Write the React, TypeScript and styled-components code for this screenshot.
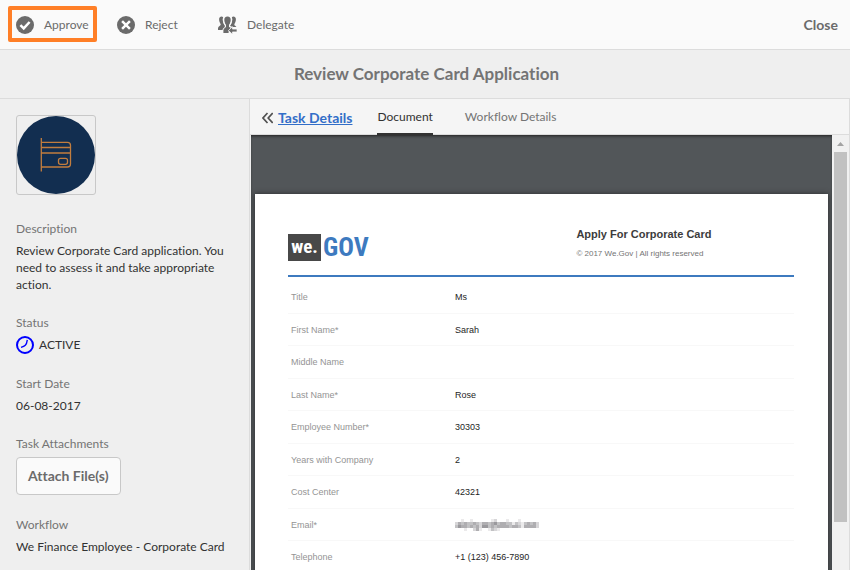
import React from 'react';
import styled, { createGlobalStyle } from 'styled-components';

const GlobalStyle = createGlobalStyle`
  *, *::before, *::after { box-sizing: border-box; }
  html, body { margin: 0; height: 100%; }
  body {
    overflow: hidden;
    font-family: Lato, "Open Sans", sans-serif;
    font-size: 12px;
    font-variant-ligatures: none;
    color: #323232;
    background: #efefef;
  }
  button { font: inherit; color: inherit; cursor: pointer; }
`;

const Page = styled.div`
  display: flex;
  flex-direction: column;
  height: 100vh;
`;

const Toolbar = styled.header`
  display: flex;
  align-items: center;
  flex: none;
  height: 50px;
  padding: 0 12px 0 16px;
  background: #fafafa;
  border-bottom: 1px solid #dcdcdc;
`;

const Action = styled.button`
  display: flex;
  min-width: 101px;
  padding: 0;
  border: 0;
  background: none;
  color: #6b6b6b;
`;

const ActionBody = styled.span<{ $highlighted?: boolean }>`
  position: relative;
  display: flex;
  align-items: center;
  gap: 10px;
  line-height: 18px;

  &::after {
    content: "";
    display: ${p => (p.$highlighted ? 'block' : 'none')};
    position: absolute;
    inset: -10px -8px -8px;
    border: 4px solid #ff7f27;
    border-radius: 2px;
  }
`;

const CloseButton = styled.button`
  margin-left: auto;
  padding: 0;
  border: 0;
  background: none;
  color: #6b6b6b;
  font-size: 14px;
  line-height: 18px;
  font-weight: 700;
`;

const TitleBar = styled.div`
  flex: none;
  height: 49px;
  padding-left: 3px;
  border-bottom: 1px solid #dcdcdc;
  text-align: center;
`;

const PageTitle = styled.h1`
  margin: 0;
  font-size: 17px;
  line-height: 48px;
  font-weight: 700;
  color: #747474;
`;

const Main = styled.div`
  display: flex;
  flex: 1;
  min-height: 0;
`;

const Sidebar = styled.aside`
  flex: none;
  width: 250px;
  padding: 16px;
  border-right: 1px solid #dcdcdc;
  overflow: hidden;
`;

const Thumbnail = styled.div`
  width: 80px;
  height: 80px;
  margin-bottom: 25px;
  border: 1px solid #c8c8c8;
  border-radius: 3px;

  svg { display: block; }
`;

const Details = styled.dl`
  display: flex;
  flex-direction: column;
  gap: 21px;
  margin: 0;
`;

const Detail = styled.div`
  display: flex;
  flex-direction: column;
  align-items: flex-start;
  gap: 4px;
`;

const DetailLabel = styled.dt`
  line-height: 18px;
  color: #747474;
`;

const DetailValue = styled.dd`
  display: flex;
  align-items: flex-start;
  gap: 5px;
  margin: 0;
  line-height: 17px;
`;

const AttachButton = styled.button`
  height: 38px;
  padding: 0 11px 2px;
  border: 1px solid #c8c8c8;
  border-radius: 4px;
  background: #fafafa;
  color: #6b6b6b;
  font-size: 14px;
  font-weight: 700;
`;

const Content = styled.main`
  display: flex;
  flex-direction: column;
  flex: 1;
  min-width: 0;
  border-right: 1px solid #dcdcdc;
`;

const Tabs = styled.nav`
  display: flex;
  align-items: stretch;
  flex: none;
  height: 36px;
  padding-left: 12px;
  background: #f5f5f5;
  border-bottom: 1px solid #dcdcdc;
`;

const BackLink = styled.a`
  display: flex;
  align-items: center;
  gap: 5px;
  margin-right: 25px;
  padding-top: 2px;
  color: #326ec8;
  font-size: 14px;
  font-weight: 700;
  text-decoration: none;

  span { text-decoration: underline; }
`;

const Tab = styled.button<{ $active?: boolean }>`
  margin: 0 32px -1px 0;
  padding: 0;
  border: 0;
  border-bottom: 2px solid ${p => (p.$active ? '#323232' : 'transparent')};
  background: none;
  color: ${p => (p.$active ? '#323232' : '#747474')};
`;

const Viewer = styled.div`
  display: flex;
  flex: 1;
  min-height: 0;
  padding-left: 1px;
`;

const Canvas = styled.div`
  flex: 1;
  min-width: 0;
  padding: 59px 4px 0;
  overflow: hidden;
  background: #525659;
  box-shadow: inset 0 2px 3px -1px #222;
`;

const Paper = styled.article`
  min-height: 100%;
  padding: 34px 34px 0 33px;
  background: #fff;
  box-shadow: 0 0 5px #2a2c2e;
  font-family: "Liberation Sans", Arial, sans-serif;
`;

const FormHeader = styled.div`
  display: grid;
  grid-template-columns: 57% 1fr;
  height: 49px;
  border-bottom: 2px solid #3d7abf;
`;

const Logo = styled.div`
  display: flex;
  align-items: flex-end;
  gap: 2px;
  height: 33px;
  font-family: "Roboto Condensed", "Open Sans Condensed", sans-serif;
  font-weight: 700;
`;

const LogoWe = styled.span`
  width: 33px;
  height: 27px;
  background: #484848;
  color: #fff;
  font-size: 19px;
  line-height: 25px;
  text-align: center;
`;

const LogoGov = styled.span`
  color: #3d7abf;
  font-size: 26px;
  line-height: 28px;
`;

const FormTitle = styled.h2`
  margin: 0;
  font-size: 11px;
  line-height: 13px;
  color: #3c3c3c;
`;

const Copyright = styled.p`
  margin: 8px 0 0;
  font-size: 8px;
  line-height: 10px;
  color: #747474;
`;

const FormTable = styled.table`
  width: 100%;
  height: 292px;
  margin-top: 5px;
  border-collapse: collapse;
  font-size: 9px;
  line-height: 12px;
`;

const FormRow = styled.tr`
  border-bottom: 1px solid #f8f8f8;
`;

const FieldName = styled.th`
  width: 33%;
  padding: 0 0 0 3px;
  text-align: left;
  font-weight: 400;
  color: #949494;
`;

const FieldValue = styled.td`
  padding: 0;
  color: #1e1e1e;

  svg { display: block; }
`;

const Scrollbar = styled.div`
  display: flex;
  flex-direction: column;
  align-items: center;
  flex: none;
  width: 17px;
  background: #f1f1f1;
`;

const ScrollArrow = styled.div`
  flex: none;
  height: 17px;
  padding-top: 7px;

  svg { display: block; }
`;

const ScrollThumb = styled.div`
  flex: 0 0 85%;
  width: 13px;
  background: #c1c1c1;
`;

const ApproveIcon = () => (
  <svg width="18" height="18" viewBox="0 0 18 18" aria-hidden="true">
    <circle cx="9" cy="9" r="9" fill="#6b6b6b" />
    <path d="M4.4 9.2 7.7 12.4 13.6 6" fill="none" stroke="#fff" strokeWidth="2.5" />
  </svg>
);

const RejectIcon = () => (
  <svg width="18" height="18" viewBox="0 0 18 18" aria-hidden="true">
    <circle cx="9" cy="9" r="9" fill="#6b6b6b" />
    <path d="M5.1 5.1 12.9 12.9M12.9 5.1 5.1 12.9" stroke="#fff" strokeWidth="2.5" />
  </svg>
);

const DelegateIcon = () => (
  <svg width="19" height="18" viewBox="0 0 19 18" aria-hidden="true">
    <g fill="#6b6b6b">
      <path d="M5.2 1.2C3.800-.2 1.200.5 1.100 3.100c0 1.400.2 2.500.7 3.400.6 1.100 1.100 1.900.8 2.600C2.300 9.900.2 10.300 0 12.200V14h4.500c.1-1.500 1.500-2.400 2.400-3V9.500C5.200 7.400 4.400 4 5.200 1.200Z" />
      <path d="M13.800 1.200c1.400-1.400 4-.7 4.100 1.900 0 1.400-.2 2.500-.7 3.400-.6 1.100-1.100 1.900-.8 2.600.2.6 1.300 1 2 1.800h-3.600l-2.700-.8V9.500c1.700-2.100 2.500-5.500 1.700-8.300Z" />
      <path d="M9.500.6C7.300.6 6.200 2 6.300 4c.1 2.100.8 3.700 1.700 4.900v2.200c-.7.9-2.400 1.200-2.600 3.100V17h5.200v-2.600l2.200-2.600-1.800-.8V8.900c.9-1.200 1.600-2.800 1.700-4.900.1-2-1-3.400-3.200-3.400Z" />
    </g>
    <path d="M5.500 1.300C4.700 4.500 5.800 7.600 7.300 9.400v1.300M13.500 1.300c.8 3.200-.3 6.300-1.800 8.100v1.200" fill="none" stroke="#fafafa" strokeWidth=".9" />
    <path d="m10.500 14.500 4-3.800v2.400H19v2.800h-4.500v2.400Z" fill="#6b6b6b" stroke="#fafafa" strokeWidth=".7" />
  </svg>
);

const CardIcon = () => (
  <svg width="78" height="78" viewBox="0 0 78 78" role="img" aria-label="Corporate card">
    <circle cx="39" cy="39" r="39" fill="#122e50" />
    <g fill="none" stroke="#c27d3e" strokeWidth="1.3">
      <path d="M24.300 22v33.500M24.300 26.300H50.500q3 0 3 3v18.700q0 3-3 3H24.300M24.300 31.500H53.500M24.300 37H53.500" />
      <rect x="41.500" y="42.300" width="9" height="6" rx="2" />
    </g>
  </svg>
);

const ClockIcon = () => (
  <svg width="18" height="18" viewBox="0 0 18 18" aria-hidden="true">
    <circle cx="9" cy="9" r="8" fill="none" stroke="#00f" strokeWidth="2" />
    <path d="M11.3 3.8C11 6 10.4 8.2 9.3 9.2 8.3 10.2 6.8 10.8 5 11.3" fill="none" stroke="#00f" strokeWidth="1.4" />
  </svg>
);

const ChevronsIcon = () => (
  <svg width="11" height="12" viewBox="0 0 11 12" aria-hidden="true">
    <path d="M5.5 1 1 6l4.500 5M10.700 1 6.200 6l4.500 5" fill="none" stroke="#505050" strokeWidth="1.700" />
  </svg>
);

// Each digit is the darkness of one 3px cell of the masked address.
const MASK = [
  '0010010000001200010001000000',
  '2434334324434534433132134342',
  '3544343425534344443443144442',
  '0001002410013210000000000000',
];

const MaskedValue = () => (
  <svg width="84" height="12" viewBox="0 0 84 12" role="img" aria-label="Masked">
    {MASK.flatMap((row, y) =>
      [...row].map((level, x) => (
        <rect key={`${x}-${y}`} x={x * 3} y={y * 3} width="3" height="3" fill="#57555c" fillOpacity={Number(level) * 0.12} />
      )),
    )}
  </svg>
);

const FIELDS: [string, React.ReactNode][] = [
  ['Title', 'Ms'],
  ['First Name*', 'Sarah'],
  ['Middle Name', ''],
  ['Last Name*', 'Rose'],
  ['Employee Number*', '30303'],
  ['Years with Company', '2'],
  ['Cost Center', '42321'],
  ['Email*', <MaskedValue />],
  ['Telephone', '+1 (123) 456-7890'],
];

export default function App() {
  return (
    <Page>
      <GlobalStyle />
      <Toolbar>
        <Action><ActionBody $highlighted><ApproveIcon />Approve</ActionBody></Action>
        <Action><ActionBody><RejectIcon />Reject</ActionBody></Action>
        <Action><ActionBody><DelegateIcon />Delegate</ActionBody></Action>
        <CloseButton>Close</CloseButton>
      </Toolbar>
      <TitleBar><PageTitle>Review Corporate Card Application</PageTitle></TitleBar>
      <Main>
        <Sidebar>
          <Thumbnail><CardIcon /></Thumbnail>
          <Details>
            <Detail>
              <DetailLabel>Description</DetailLabel>
              <DetailValue>Review Corporate Card application. You need to assess it and take appropriate action.</DetailValue>
            </Detail>
            <Detail>
              <DetailLabel>Status</DetailLabel>
              <DetailValue><ClockIcon />ACTIVE</DetailValue>
            </Detail>
            <Detail>
              <DetailLabel>Start Date</DetailLabel>
              <DetailValue>06-08-2017</DetailValue>
            </Detail>
            <Detail>
              <DetailLabel>Task Attachments</DetailLabel>
              <DetailValue><AttachButton>Attach File(s)</AttachButton></DetailValue>
            </Detail>
            <Detail>
              <DetailLabel>Workflow</DetailLabel>
              <DetailValue>We Finance Employee - Corporate Card</DetailValue>
            </Detail>
          </Details>
        </Sidebar>
        <Content>
          <Tabs>
            <BackLink href="#details"><ChevronsIcon /><span>Task Details</span></BackLink>
            <Tab $active>Document</Tab>
            <Tab>Workflow Details</Tab>
          </Tabs>
          <Viewer>
            <Canvas>
              <Paper>
                <FormHeader>
                  <Logo><LogoWe>we.</LogoWe><LogoGov>GOV</LogoGov></Logo>
                  <div>
                    <FormTitle>Apply For Corporate Card</FormTitle>
                    <Copyright>© 2017 We.Gov | All rights reserved</Copyright>
                  </div>
                </FormHeader>
                <FormTable>
                  <tbody>
                    {FIELDS.map(([name, value]) => (
                      <FormRow key={name}>
                        <FieldName scope="row">{name}</FieldName>
                        <FieldValue>{value}</FieldValue>
                      </FormRow>
                    ))}
                  </tbody>
                </FormTable>
              </Paper>
            </Canvas>
            <Scrollbar>
              <ScrollArrow>
                <svg width="7" height="4" viewBox="0 0 7 4" aria-hidden="true"><path d="M0 4 3.5 0 7 4Z" fill="#a3a3a3" /></svg>
              </ScrollArrow>
              <ScrollThumb />
            </Scrollbar>
          </Viewer>
        </Content>
      </Main>
    </Page>
  );
}
